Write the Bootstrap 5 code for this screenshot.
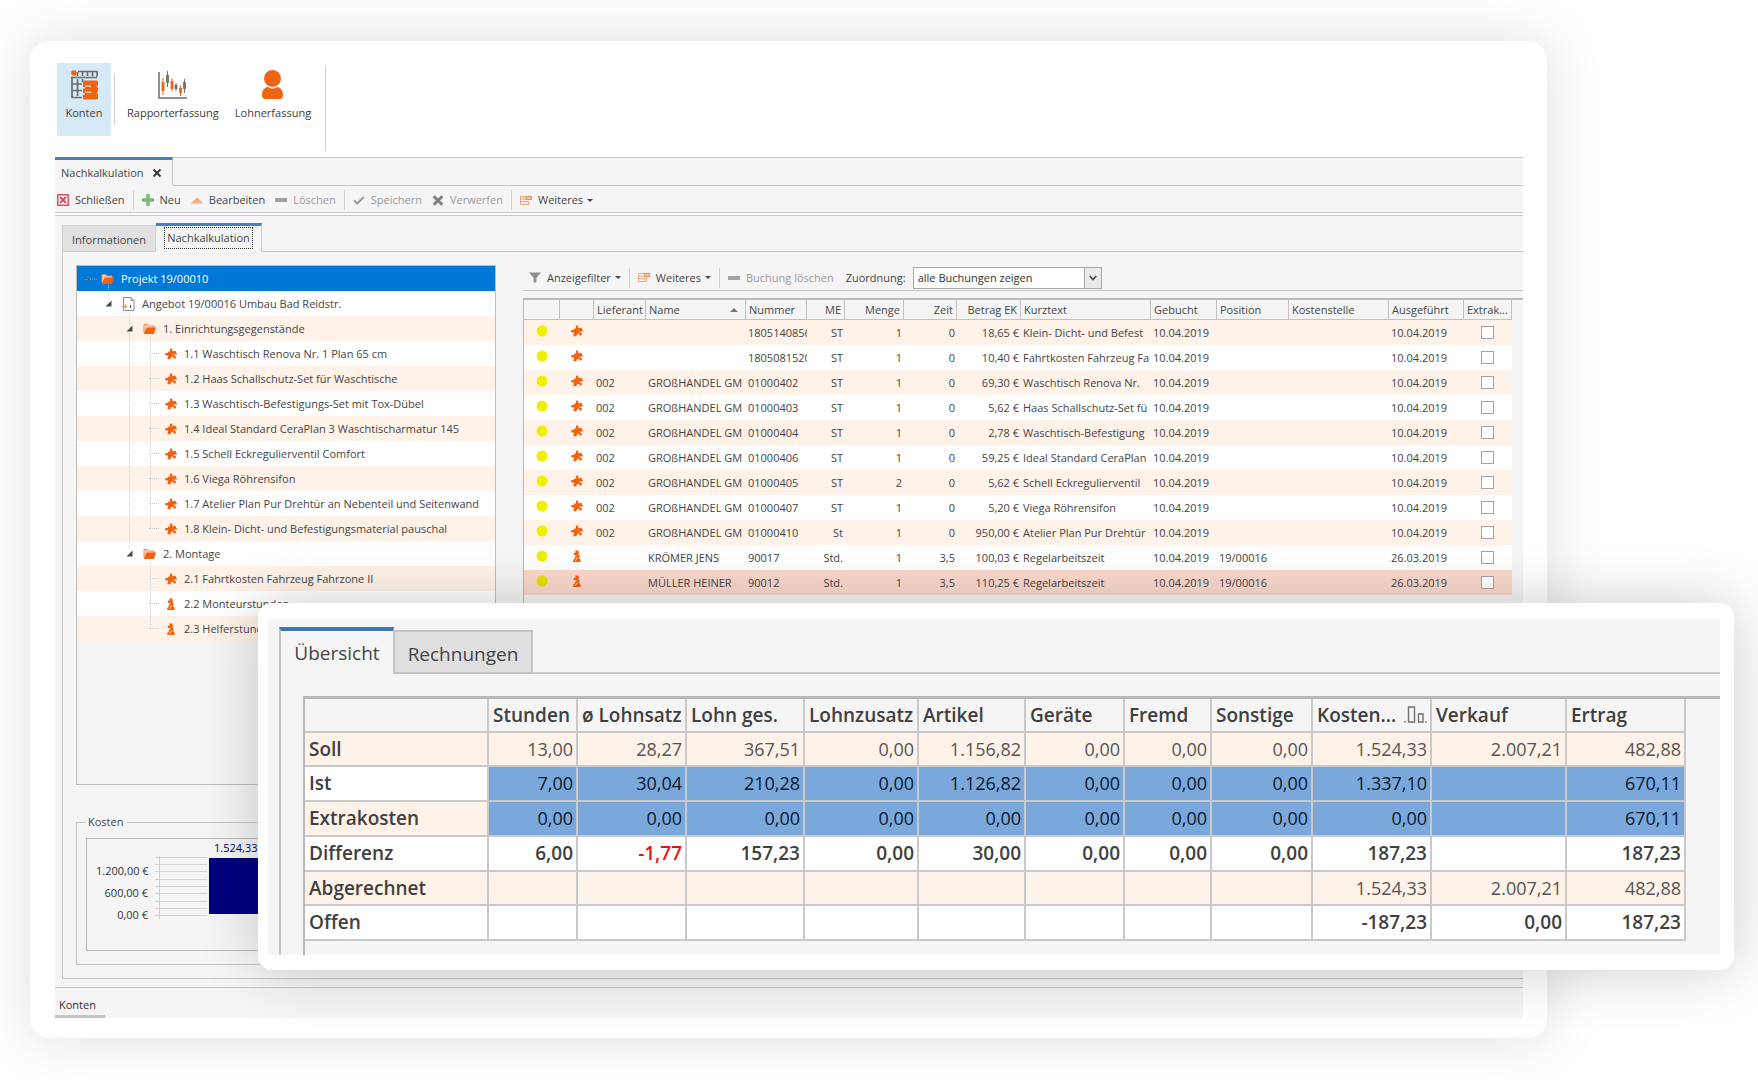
<!DOCTYPE html>
<html lang="de">
<head>
<meta charset="utf-8">
<meta name="viewport" content="width=device-width, initial-scale=1">
<title>Nachkalkulation</title>
<link href="https://cdn.jsdelivr.net/npm/bootstrap@5.3.0/dist/css/bootstrap.min.css" rel="stylesheet">
<style>
:root{--line:#c6c6c6;--panel:#f5f5f5;--peach:#fff2e8;--orange:#ee6412;--ink:#454545}
body{font-family:"Open Sans","Noto Sans",sans-serif;font-size:11px;line-height:16px;color:var(--ink);background:#fff;padding:41px 211px 42px 30px;overflow-x:hidden}
svg{display:block;flex:none}
button{font:inherit;color:inherit;background:none;border:0;padding:0;white-space:nowrap}
.window{position:relative;background:#fff;border-radius:20px;padding:22px 24px 20px 25px;box-shadow:0 0 60px rgba(0,0,0,.13)}
.ribbon{height:94px;padding-left:2px}
.ribbon button{display:flex;flex-direction:column;align-items:center;padding-top:7px;height:73px;color:#3c3c3c}
.ribbon svg{margin-bottom:5px}
.ribbon .chosen{background:#d5e9f7;width:54px}
.rule{width:1px;background:#d0d0d0;flex:none}
.rule.short{height:51px;margin:11px 8px 0 3px}
.rule.long{height:85px;margin:3px 0 0 10px}
.doctabs{height:29px;border-top:1px solid var(--line);background:var(--panel)}
.doctabs .doc{width:118px;height:28px;border-top:3px solid #4a80b8;border-right:1px solid var(--line);padding:0 0 0 6px;margin-top:-1px}
.doctabs .fill{border-bottom:1px solid var(--line)}
.tools{height:27px;background:var(--panel);border-bottom:1px solid var(--line);padding:5px 0 0 2px}
.tools button,.subtools button{display:flex;align-items:center;height:18px}
.tools button>svg,.subtools button>svg{margin-right:6px}
.tools .rule,.subtools .rule{height:20px;margin:0 8px}
.tools .rule{margin-top:-1px}
.tools button+button{margin-left:10px}
.off{color:#9b9b9b!important}
.caret{width:0;height:0;border:3px solid transparent;border-top:3px solid #444;border-bottom:0;margin-left:4px}
.work{background:var(--panel);border-top:1px solid var(--line);margin-top:2px;padding:7px 0 8px 7px;border-bottom:1px solid var(--line)}
.innertabs button{border:1px solid #cfcfcf}
.innertabs .idle{background:#e1e1e1;width:94px;height:27px;margin-top:2px;padding-top:2px}
.innertabs .current{width:106px;height:29px;border-top:3px solid #4a80b8;border-bottom:0;border-left:0;padding:0 0 2px}
.innertabs .current span{outline:1px dotted #333;padding:1px 2px;display:inline-block;line-height:18px}
.innertabs .fill{border-bottom:1px solid var(--line)}
.sheet{border:solid var(--line);border-width:0 0 1px 1px;padding:13px 0 13px 13px}
.tree{width:420px;height:520px;border:1px solid #bdbdbd;background:var(--panel);list-style:none;margin:0 27px 0 0;padding:0;flex:none;position:relative}
.tree li{height:25px;display:flex;align-items:center;white-space:nowrap;font-size:11px}
.tree li:nth-child(odd){background:var(--peach)}
.tree li:nth-child(even){background:#fff}
.tree li.top{background:#0078d7;color:#fff;padding-left:8px}
.lv1{padding-left:28px}.lv2{padding-left:49px}.lv3{padding-left:72px}
.tree svg+span{margin-left:7px}
.tree svg.exp{margin-right:10px}
.tree .dash{width:10px;border-top:1px dotted #c9c9c9;margin-right:6px}
.guides{position:absolute;left:0;top:0}
.subtools{height:26px;border-bottom:1px solid var(--line);margin-bottom:7px;padding-left:6px}
.subtools select{appearance:none;width:189px;height:22px;border:1px solid #a8a8a8;border-radius:0;background:#fff;font:inherit;color:#333;padding:0 4px}
.subtools label{margin-left:12px}
.pick{position:relative;margin-left:7px}
.pick i{position:absolute;right:0;top:0;width:18px;height:22px;border:1px solid #a8a8a8;background:#eaeaea;pointer-events:none;display:flex;align-items:center;justify-content:center}
.gridwrap{border-top:2px solid #b9b9b9;border-left:1px solid #b9b9b9;padding-right:11px;height:486px}
.bookings{table-layout:fixed;width:100%;border-collapse:separate;border-spacing:0}
.bookings th{height:20px;font-weight:400;border-right:1px solid #c2c2c2;border-bottom:1px solid #c2c2c2;padding:0 3px;white-space:nowrap;line-height:18px}
.bookings td{height:25px;padding:0 3px 0 2px;white-space:nowrap;overflow:hidden;line-height:16px;vertical-align:middle}
.bookings tbody tr:nth-child(odd){background:var(--peach)}
.bookings tbody tr:nth-child(even){background:#fff}
.bookings tbody tr.hot{background:#fbd8cc}
.bookings td svg{margin:0 auto 3px}
.bookings input{appearance:none;width:13px;height:13px;border:1px solid #a3a3a3;background:#fff;margin:0 auto;display:block}
.n{text-align:right}
.bookings td.n{padding-right:2px}
.costs{border:1px solid var(--line);margin:29px 13px 0 0;padding:8px 9px 13px;height:151px}
.costs legend{float:none;width:auto;font-size:11px;line-height:16px;margin:0;padding:0 4px 0 2px}
.plot{border:1px solid #b9b9b9;height:113px;padding:0 0 0 9px}
.scale{width:52px;text-align:right;padding-top:21px;line-height:22px;color:#333;white-space:nowrap}
.drawing{margin-top:17px;margin-left:7px}
.figure-bar{margin-left:2px;width:104px;color:#000080;padding-top:1px}
.figure-bar span{margin-left:5px}
.figure-bar div{background:#000080;height:56px;margin-top:2px}
.status{background:var(--panel);height:30px}
.status button{width:50px;height:30px;border-bottom:3px solid #c4c4c4;text-align:left;padding:6px 0 0 4px;color:#333}
.overlay{position:absolute;left:228px;right:-187px;top:562px;background:#fff;border-radius:14px;padding:16px 14px 15px 10px;box-shadow:0 0 60px rgba(0,0,0,.2)}
.face{background:var(--panel);padding:8px 0 0 11px}
.bigtabs{font-size:19px;line-height:24px}
.bigtabs button{border:2px solid #c3c3c3}
.bigtabs .idle{width:139px;height:44px;margin-top:3px;padding-top:3px;background:#dfdfdf;border-left-width:1px}
.bigtabs .current{width:115px;height:47px;border-top:4px solid #3f78b0;border-bottom:0;border-right-width:1px}
.bigtabs .fill{border-bottom:2px solid #c9c9c9}
.body2{border-left:2px solid #c3c3c3;padding:22px 0 0 22px}
.rim{border-top:3px solid #b8b8b8;border-left:2px solid #b8b8b8;padding:0 36px 14px 0}
.totals{table-layout:fixed;width:100%;border-collapse:separate;border-spacing:0;font-size:18px;line-height:24px}
.totals th,.totals td{border:solid #c9c9c9;border-width:0 2px 2px 0;padding:0 3px 1px 4px;white-space:nowrap}
.totals td{text-align:right;color:#555}
.totals th{font-weight:600;font-size:19px;color:#404040}
.totals thead th{height:34px;padding-bottom:0}
.totals tbody th{height:35px;background:#fff}
.totals tbody tr.peach th{height:34px}
.totals tbody td{background:#fff}
.totals tr.peach th,.totals tr.peach td,.totals th.tint{background:var(--peach)}
.totals tr.blue td{background:#7ba8db;color:#07182c}
.totals tr.strong td{font-weight:600;font-size:19px;color:#404040}
.totals td.neg{color:#f01010!important}
</style>
<script src="https://cdn.jsdelivr.net/npm/bootstrap@5.3.0/dist/js/bootstrap.bundle.min.js"></script>
</head>
<body>
<svg width="0" height="0" class="position-absolute" aria-hidden="true">
  <symbol id="puzzle" viewBox="0 0 12 12"><path fill="#ee6412" d="M4.800 1.700C4.900.3 7.200.1 7.400 1.700c.1.700-.2 1 0 1.600l3.200-.6.500 2c.5.200.9.300.9 1s-.6 1-1.300.9l-2.500.2c.2.700.9.600 1.500.8.900.3 1.300 1.200 1.200 2.300l-1.300.9c-.9-.2-.8-1-1.400-1.600-.8-.8-1.700-.4-2.200.4l-.8 1.900-3-.5.9-2.500c.2-.7-.2-1-.9-1C1 7.500.1 7.300.1 6.200s1-1.500 1.800-1.200c.8.200 1.100-.2 1.200-.8l.4-.8 1.500.1c.3-.5-.2-1.100-.2-1.800Z"/></symbol>
  <symbol id="worker" viewBox="0 0 12 12"><path fill="#ee6412" d="M4 .4h3.200l.8 1.800-.5 2.200 1.200 1.200-.4 3 1.300 1.200V12H2.200v-2l1.500-1.500.6-3L2.600 4.300 3 2.500l1.500.2.200-1Z"/><path stroke="#fff" stroke-width=".8" d="M2.800 7.800 5.400 5.200M6.500 7.500l-2 3"/></symbol>
  <symbol id="folder" viewBox="0 0 13 12"><path fill="#f9d3ba" stroke="#ee8a50" d="M1 9.500V1.500h3.500l1 1.500H11v2"/><path fill="#ee6412" d="M3.500 4.500H13l-2 6.500H.8Z"/></symbol>
  <symbol id="sheet" viewBox="0 0 13 14"><path fill="#fff" stroke="#8c8c8c" d="M1.500.5h7.500l3 3v10H1.500Z"/><path fill="none" stroke="#8c8c8c" d="M9 .5v3h3"/><path stroke="#ee8a50" d="M0 9.500h5M3.500 7.500v4"/><path stroke="#555" d="M8.500 8v3"/></symbol>
  <symbol id="tri" viewBox="0 0 7 7"><path fill="#4a4a4a" d="M6.500.5v6h-6Z"/></symbol>
  <symbol id="more" viewBox="0 0 12 11"><path fill="none" stroke="#f2a078" d="M7 1.500H.5v8h8V6M.5 4h5.500M.5 6.700h8"/><path fill="#f7c3a6" stroke="#ee8a50" d="M6.500 1.500h5v3h-5Z"/></symbol>
  <symbol id="minus" viewBox="0 0 12 4"><path fill="#a2a2a2" d="M0 0h12v4H0z"/></symbol>
</svg>

<main class="window">
  <div class="ribbon d-flex">
    <button class="chosen">
      <svg width="27" height="30" viewBox="0 0 27 30"><path fill="none" stroke="#6e6e6e" stroke-width="1.700" d="M7 1.500h19v5M1 7.500h25M1 6.500v21h10M1 14h10M1 20.500h10M6.500 2v4M11.500 2v4M16.500 2v4M21.500 2v4M6.500 9v17M11.500 9v3"/><circle cx="3" cy="3" r="2.800" fill="#ee6412"/><path fill="#ee6412" d="M12 12q0-1.500 1.500-1.500h12q1.500 0 1.500 1.500v3.500h-1v2h1v4h-1v2h1v4.500q0 1.500-1.500 1.500h-12Q12 29.500 12 28v-3.500h2v-1.500h-2v-4.500h2V17h-2Z"/><path stroke="#fff" stroke-width=".9" d="M14 16.200h6M14 22.200h6"/></svg>
      Konten</button>
    <span class="rule short"></span>
    <button class="px-1">
      <svg width="29" height="30" viewBox="0 0 29 30"><path fill="none" stroke="#6e6e6e" stroke-width="1.500" d="M1 2v26h28"/><path stroke="#6e6e6e" stroke-width="1" d="M9.500 1v16M18 13v8M26.500 9v14"/><path stroke="#6e6e6e" stroke-width="2.800" d="M9.500 5v8M18 15v4M26.500 12v7"/><path stroke="#ee6412" stroke-width="1" d="M5 8v17M14 8v13M22.500 15v11"/><path stroke="#ee6412" stroke-width="2.800" d="M5 12v9M14 11v8M22.500 18v5"/></svg>
      Rapporterfassung</button>
    <button class="ms-2 px-1">
      <svg width="23" height="30" viewBox="0 0 23 30"><ellipse cx="11.500" cy="8.500" rx="8.500" ry="8.500" fill="#ee6412"/><path fill="#ee6412" d="M1 25c0-5 3-8 6-8 3 2 6 2 9 0 3 0 6 3 6 8 0 2-1 4-3 4H4c-2 0-3-2-3-4Z"/></svg>
      Lohnerfassung</button>
    <span class="rule long"></span>
  </div>

  <div class="doctabs d-flex">
    <button class="doc d-flex align-items-center">Nachkalkulation
      <svg class="ms-2" width="10" height="10" viewBox="0 0 10 10"><path stroke="#333" stroke-width="1.800" d="m1.500 1.500 7 7m0-7-7 7"/></svg></button>
    <span class="fill flex-grow-1"></span>
  </div>

  <div class="tools d-flex align-items-start">
    <button><svg width="12" height="12" viewBox="0 0 12 12"><path fill="#fff" stroke="#cf5064" stroke-width="1.500" d="M.8.8h10.400v10.400H.8Z"/><path stroke="#cf5064" stroke-width="2" d="m3 3 6 6m0-6-6 6"/></svg>Schließen</button>
    <span class="rule"></span>
    <button><svg width="12" height="12" viewBox="0 0 12 12"><path stroke="#7cba78" stroke-width="3.500" d="M6 0v12M0 6h12"/></svg>Neu</button>
    <button><svg width="12" height="7" viewBox="0 0 12 7"><path fill="#f5ae7e" d="M6 0l6 6.500H0Z"/></svg>Bearbeiten</button>
    <button class="off"><svg width="12" height="4"><use href="#minus"/></svg>Löschen</button>
    <span class="rule"></span>
    <button class="off"><svg width="12" height="9" viewBox="0 0 12 9"><path fill="none" stroke="#9b9b9b" stroke-width="2" d="m1.200 4.500 3 3L10.800 1"/></svg>Speichern</button>
    <button class="off"><svg width="12" height="11" viewBox="0 0 12 11"><path stroke="#808080" stroke-width="3" d="m1.700 1.200 8.600 8.600m0-8.600L1.700 9.800"/></svg>Verwerfen</button>
    <span class="rule"></span>
    <button><svg width="12" height="11"><use href="#more"/></svg>Weiteres<span class="caret"></span></button>
  </div>

  <section class="work">
    <div class="innertabs d-flex">
      <button class="idle">Informationen</button>
      <button class="current"><span>Nachkalkulation</span></button>
      <span class="fill flex-grow-1"></span>
    </div>
    <div class="sheet">
      <div class="d-flex">
        <ul class="tree">
          <li class="top"><svg width="12" height="6" viewBox="0 0 12 6"><path stroke="#a57b68" d="M0 3.500h3M2 1.500h2v3"/><path stroke="#8fb4dc" stroke-dasharray="1 1" d="M5 3h7"/></svg><svg class="ms-1" width="13" height="12"><use href="#folder"/></svg><span>Projekt 19/00010</span></li>
          <li class="lv1"><svg class="exp" width="7" height="7"><use href="#tri"/></svg><svg width="13" height="14"><use href="#sheet"/></svg><span>Angebot 19/00016 Umbau Bad Reidstr.</span></li>
          <li class="lv2"><svg class="exp" width="7" height="7"><use href="#tri"/></svg><svg width="13" height="12"><use href="#folder"/></svg><span>1. Einrichtungsgegenstände</span></li>
          <li class="lv3"><i class="dash"></i><svg width="12" height="12"><use href="#puzzle"/></svg><span>1.1 Waschtisch Renova Nr. 1 Plan 65 cm</span></li>
          <li class="lv3"><i class="dash"></i><svg width="12" height="12"><use href="#puzzle"/></svg><span>1.2 Haas Schallschutz-Set für Waschtische</span></li>
          <li class="lv3"><i class="dash"></i><svg width="12" height="12"><use href="#puzzle"/></svg><span>1.3 Waschtisch-Befestigungs-Set mit Tox-Dübel</span></li>
          <li class="lv3"><i class="dash"></i><svg width="12" height="12"><use href="#puzzle"/></svg><span>1.4 Ideal Standard CeraPlan 3 Waschtischarmatur 145</span></li>
          <li class="lv3"><i class="dash"></i><svg width="12" height="12"><use href="#puzzle"/></svg><span>1.5 Schell Eckregulierventil Comfort</span></li>
          <li class="lv3"><i class="dash"></i><svg width="12" height="12"><use href="#puzzle"/></svg><span>1.6 Viega Röhrensifon</span></li>
          <li class="lv3"><i class="dash"></i><svg width="12" height="12"><use href="#puzzle"/></svg><span>1.7 Atelier Plan Pur Drehtür an Nebenteil und Seitenwand</span></li>
          <li class="lv3"><i class="dash"></i><svg width="12" height="12"><use href="#puzzle"/></svg><span>1.8 Klein- Dicht- und Befestigungsmaterial pauschal</span></li>
          <li class="lv2"><svg class="exp" width="7" height="7"><use href="#tri"/></svg><svg width="13" height="12"><use href="#folder"/></svg><span>2. Montage</span></li>
          <li class="lv3"><i class="dash"></i><svg width="12" height="12"><use href="#puzzle"/></svg><span>2.1 Fahrtkosten Fahrzeug Fahrzone II</span></li>
          <li class="lv3"><i class="dash"></i><svg width="12" height="12"><use href="#worker"/></svg><span>2.2 Monteurstunden</span></li>
          <li class="lv3"><i class="dash"></i><svg width="12" height="12"><use href="#worker"/></svg><span>2.3 Helferstunden</span></li>
          <svg class="guides" width="90" height="380" viewBox="0 0 90 380"><path fill="none" stroke="#cfcfcf" stroke-dasharray="1 1" d="M31.500 19v15M52.500 46v15M52.500 67v216M73.500 71v191M73.500 296v67"/></svg>
        </ul>

        <div class="flex-grow-1" style="min-width:0">
          <div class="subtools d-flex align-items-center">
            <button><svg width="12" height="11" viewBox="0 0 13 11"><path fill="#8f8f8f" d="M0 0h13L8 6v5H5V6Z"/></svg>Anzeigefilter<span class="caret"></span></button>
            <span class="rule"></span>
            <button><svg width="12" height="11"><use href="#more"/></svg>Weiteres<span class="caret"></span></button>
            <span class="rule"></span>
            <button class="off"><svg width="12" height="4"><use href="#minus"/></svg>Buchung löschen</button>
            <label for="assign">Zuordnung:</label>
            <span class="pick"><select id="assign"><option>alle Buchungen zeigen</option></select><i><svg width="8" height="6" viewBox="0 0 8 6"><path fill="none" stroke="#444" stroke-width="1.600" d="m.8 1 3.200 3.500L7.200 1"/></svg></i></span>
          </div>
          <div class="gridwrap">
            <table class="bookings">
              <colgroup><col style="width:36px"><col style="width:34px"><col style="width:52px"><col style="width:100px"><col style="width:61px"><col style="width:38px"><col style="width:59px"><col style="width:53px"><col style="width:64px"><col style="width:130px"><col style="width:66px"><col style="width:72px"><col style="width:100px"><col style="width:75px"><col style="width:48px"></colgroup>
              <thead><tr><th></th><th></th><th>Lieferant</th><th><span class="d-flex align-items-center justify-content-between">Name<svg class="me-1" width="8" height="4" viewBox="0 0 8 4"><path fill="#777" d="M4 0l4 4H0Z"/></svg></span></th><th>Nummer</th><th class="n">ME</th><th class="n">Menge</th><th class="n">Zeit</th><th class="n">Betrag EK</th><th>Kurztext</th><th>Gebucht</th><th>Position</th><th>Kostenstelle</th><th>Ausgeführt</th><th>Extrak...</th></tr></thead>
              <tbody>
<tr><td><svg width="12" height="12"><circle cx="6" cy="6" r="5.500" fill="#efef00"/></svg></td><td><svg width="12" height="12"><use href="#puzzle"/></svg></td><td></td><td></td><td>1805140856</td><td class="n">ST</td><td class="n">1</td><td class="n">0</td><td class="n">18,65 €</td><td>Klein- Dicht- und Befest</td><td>10.04.2019</td><td></td><td></td><td>10.04.2019</td><td><input type="checkbox" aria-label="Extrakosten"></td></tr>
<tr><td><svg width="12" height="12"><circle cx="6" cy="6" r="5.500" fill="#efef00"/></svg></td><td><svg width="12" height="12"><use href="#puzzle"/></svg></td><td></td><td></td><td>1805081520</td><td class="n">ST</td><td class="n">1</td><td class="n">0</td><td class="n">10,40 €</td><td>Fahrtkosten Fahrzeug Fa</td><td>10.04.2019</td><td></td><td></td><td>10.04.2019</td><td><input type="checkbox" aria-label="Extrakosten"></td></tr>
<tr><td><svg width="12" height="12"><circle cx="6" cy="6" r="5.500" fill="#efef00"/></svg></td><td><svg width="12" height="12"><use href="#puzzle"/></svg></td><td>002</td><td>GROßHANDEL GM</td><td>01000402</td><td class="n">ST</td><td class="n">1</td><td class="n">0</td><td class="n">69,30 €</td><td>Waschtisch Renova Nr.</td><td>10.04.2019</td><td></td><td></td><td>10.04.2019</td><td><input type="checkbox" aria-label="Extrakosten"></td></tr>
<tr><td><svg width="12" height="12"><circle cx="6" cy="6" r="5.500" fill="#efef00"/></svg></td><td><svg width="12" height="12"><use href="#puzzle"/></svg></td><td>002</td><td>GROßHANDEL GM</td><td>01000403</td><td class="n">ST</td><td class="n">1</td><td class="n">0</td><td class="n">5,62 €</td><td>Haas Schallschutz-Set fü</td><td>10.04.2019</td><td></td><td></td><td>10.04.2019</td><td><input type="checkbox" aria-label="Extrakosten"></td></tr>
<tr><td><svg width="12" height="12"><circle cx="6" cy="6" r="5.500" fill="#efef00"/></svg></td><td><svg width="12" height="12"><use href="#puzzle"/></svg></td><td>002</td><td>GROßHANDEL GM</td><td>01000404</td><td class="n">ST</td><td class="n">1</td><td class="n">0</td><td class="n">2,78 €</td><td>Waschtisch-Befestigung</td><td>10.04.2019</td><td></td><td></td><td>10.04.2019</td><td><input type="checkbox" aria-label="Extrakosten"></td></tr>
<tr><td><svg width="12" height="12"><circle cx="6" cy="6" r="5.500" fill="#efef00"/></svg></td><td><svg width="12" height="12"><use href="#puzzle"/></svg></td><td>002</td><td>GROßHANDEL GM</td><td>01000406</td><td class="n">ST</td><td class="n">1</td><td class="n">0</td><td class="n">59,25 €</td><td>Ideal Standard CeraPlan</td><td>10.04.2019</td><td></td><td></td><td>10.04.2019</td><td><input type="checkbox" aria-label="Extrakosten"></td></tr>
<tr><td><svg width="12" height="12"><circle cx="6" cy="6" r="5.500" fill="#efef00"/></svg></td><td><svg width="12" height="12"><use href="#puzzle"/></svg></td><td>002</td><td>GROßHANDEL GM</td><td>01000405</td><td class="n">ST</td><td class="n">2</td><td class="n">0</td><td class="n">5,62 €</td><td>Schell Eckregulierventil</td><td>10.04.2019</td><td></td><td></td><td>10.04.2019</td><td><input type="checkbox" aria-label="Extrakosten"></td></tr>
<tr><td><svg width="12" height="12"><circle cx="6" cy="6" r="5.500" fill="#efef00"/></svg></td><td><svg width="12" height="12"><use href="#puzzle"/></svg></td><td>002</td><td>GROßHANDEL GM</td><td>01000407</td><td class="n">ST</td><td class="n">1</td><td class="n">0</td><td class="n">5,20 €</td><td>Viega Röhrensifon</td><td>10.04.2019</td><td></td><td></td><td>10.04.2019</td><td><input type="checkbox" aria-label="Extrakosten"></td></tr>
<tr><td><svg width="12" height="12"><circle cx="6" cy="6" r="5.500" fill="#efef00"/></svg></td><td><svg width="12" height="12"><use href="#puzzle"/></svg></td><td>002</td><td>GROßHANDEL GM</td><td>01000410</td><td class="n">St</td><td class="n">1</td><td class="n">0</td><td class="n">950,00 €</td><td>Atelier Plan Pur Drehtür</td><td>10.04.2019</td><td></td><td></td><td>10.04.2019</td><td><input type="checkbox" aria-label="Extrakosten"></td></tr>
<tr><td><svg width="12" height="12"><circle cx="6" cy="6" r="5.500" fill="#efef00"/></svg></td><td><svg width="12" height="12"><use href="#worker"/></svg></td><td></td><td>KRÖMER JENS</td><td>90017</td><td class="n">Std.</td><td class="n">1</td><td class="n">3,5</td><td class="n">100,03 €</td><td>Regelarbeitszeit</td><td>10.04.2019</td><td>19/00016</td><td></td><td>26.03.2019</td><td><input type="checkbox" aria-label="Extrakosten"></td></tr>
<tr class="hot"><td><svg width="12" height="12"><circle cx="6" cy="6" r="5.500" fill="#e6e000"/></svg></td><td><svg width="12" height="12"><use href="#worker"/></svg></td><td></td><td>MÜLLER HEINER</td><td>90012</td><td class="n">Std.</td><td class="n">1</td><td class="n">3,5</td><td class="n">110,25 €</td><td>Regelarbeitszeit</td><td>10.04.2019</td><td>19/00016</td><td></td><td>26.03.2019</td><td><input type="checkbox" aria-label="Extrakosten"></td></tr>
              </tbody>
            </table>
          </div>
        </div>
      </div>

      <fieldset class="costs">
        <legend>Kosten</legend>
        <div class="plot d-flex align-items-start">
          <div class="scale"><div>1.200,00 €</div><div>600,00 €</div><div>0,00 €</div></div>
          <svg class="drawing" width="52" height="64" viewBox="0 0 52 64"><path stroke="#d6d6d6" d="M0 1.500h52M0 8.500h52M0 15.500h52M0 23.500h52M0 30.500h52M0 37.500h52M0 45.500h52M0 52.500h52M0 59.500h52"/><path stroke="#e6c6b8" d="M4.500 0v63"/></svg>
          <div class="figure-bar"><span>1.524,33</span><div></div></div>
        </div>
      </fieldset>
    </div>
  </section>

  <footer class="status"><button>Konten</button></footer>

  <section class="overlay">
    <div class="face">
      <div class="bigtabs d-flex">
        <button class="current">Übersicht</button>
        <button class="idle">Rechnungen</button>
        <span class="fill flex-grow-1"></span>
      </div>
      <div class="body2">
        <div class="rim">
          <table class="totals">
            <colgroup><col style="width:184px"><col style="width:89px"><col style="width:109px"><col style="width:118px"><col style="width:114px"><col style="width:107px"><col style="width:99px"><col style="width:87px"><col style="width:101px"><col style="width:119px"><col style="width:135px"><col style="width:119px"></colgroup>
            <thead><tr><th></th><th>Stunden</th><th>ø Lohnsatz</th><th>Lohn ges.</th><th>Lohnzusatz</th><th>Artikel</th><th>Geräte</th><th>Fremd</th><th>Sonstige</th><th><span class="d-flex align-items-center justify-content-between">Kosten...<svg width="23" height="18" viewBox="0 0 23 18"><path fill="none" stroke="#707070" stroke-width="1.400" d="M4.500 1h6v15h-6ZM14.500 8h4.500v8h-4.500Z"/><path stroke="#909090" stroke-width="1.400" d="M0 16h2M21 16h2"/></svg></span></th><th>Verkauf</th><th>Ertrag</th></tr></thead>
            <tbody>
              <tr class="peach"><th>Soll</th><td>13,00</td><td>28,27</td><td>367,51</td><td>0,00</td><td>1.156,82</td><td>0,00</td><td>0,00</td><td>0,00</td><td>1.524,33</td><td>2.007,21</td><td>482,88</td></tr>
              <tr class="blue"><th>Ist</th><td>7,00</td><td>30,04</td><td>210,28</td><td>0,00</td><td>1.126,82</td><td>0,00</td><td>0,00</td><td>0,00</td><td>1.337,10</td><td></td><td>670,11</td></tr>
              <tr class="blue"><th class="tint">Extrakosten</th><td>0,00</td><td>0,00</td><td>0,00</td><td>0,00</td><td>0,00</td><td>0,00</td><td>0,00</td><td>0,00</td><td>0,00</td><td></td><td>670,11</td></tr>
              <tr class="strong"><th>Differenz</th><td>6,00</td><td class="neg">-1,77</td><td>157,23</td><td>0,00</td><td>30,00</td><td>0,00</td><td>0,00</td><td>0,00</td><td>187,23</td><td></td><td>187,23</td></tr>
              <tr class="peach"><th>Abgerechnet</th><td></td><td></td><td></td><td></td><td></td><td></td><td></td><td></td><td>1.524,33</td><td>2.007,21</td><td>482,88</td></tr>
              <tr class="strong"><th>Offen</th><td></td><td></td><td></td><td></td><td></td><td></td><td></td><td></td><td>-187,23</td><td>0,00</td><td>187,23</td></tr>
            </tbody>
          </table>
        </div>
      </div>
    </div>
  </section>
</main>
</body>
</html>
